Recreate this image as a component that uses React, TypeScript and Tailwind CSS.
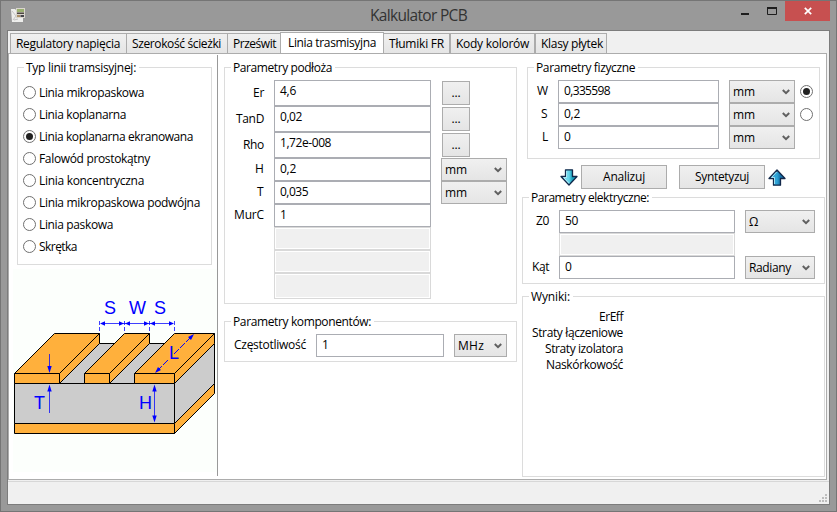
import { useLayoutEffect, useRef, useState } from "react";
import type { ReactNode } from "react";

/* Text whose tracking is tuned so that it takes exactly `w` pixels. */
function Fit({ w, children }: { w: number; children: string }) {
  const ref = useRef<HTMLSpanElement>(null);
  const [spacing, setSpacing] = useState(0);
  useLayoutEffect(() => {
    if (ref.current) {
      const natural = ref.current.getBoundingClientRect().width;
      setSpacing((w - natural) / children.length);
    }
  }, [w, children]);
  return (
    <span ref={ref} className="inline-block whitespace-nowrap" style={{ letterSpacing: spacing }}>
      {children}
    </span>
  );
}

function Group({ title, w, className, children }: { title: string; w: number; className: string; children?: ReactNode }) {
  return (
    <fieldset className={`shrink-0 border border-[#dcdcdc] ${className}`}>
      <legend className="ml-[6px] h-[15px] pl-[2px] pr-[3px] leading-[15px]">
        <Fit w={w}>{title}</Fit>
      </legend>
      {children}
    </fieldset>
  );
}

function Radio({ on = false }: { on?: boolean }) {
  return (
    <span className="flex size-[13px] shrink-0 items-center justify-center rounded-full border border-[#707070] bg-white">
      {on && <span className="size-[7px] rounded-full bg-[#212121]" />}
    </span>
  );
}

function Field({ text, w, className }: { text: string; w: number; className: string }) {
  return (
    <div className={`shrink-0 border border-[#abadb3] bg-white pl-[5px] pt-[2px] leading-4 ${className}`}>
      <Fit w={w}>{text}</Fit>
    </div>
  );
}

function Disabled({ className }: { className: string }) {
  return <div className={`shrink-0 border border-[#d9d9d9] bg-[#f0f0f0] shadow-[inset_0_0_0_1px_#fff] ${className}`} />;
}

function Select({ text, w, className }: { text: string; w: number; className: string }) {
  return (
    <div
      className={`flex h-[23px] shrink-0 items-center justify-between border border-[#acacac] bg-linear-to-b from-[#f0f0f0] to-[#e5e5e5] pl-[3px] pr-[4px] pt-px leading-4 ${className}`}
    >
      <Fit w={w}>{text}</Fit>
      <svg className="-mt-px h-[6px] w-[8px]" viewBox="0 0 8 6">
        <path d="M0.8 1 L4 4.2 L7.2 1" fill="none" stroke="#606060" strokeWidth="2" />
      </svg>
    </div>
  );
}

function Button({ text, w, className }: { text: string; w: number; className: string }) {
  return (
    <div
      className={`flex h-[24px] shrink-0 items-center justify-center border border-[#acacac] bg-linear-to-b from-[#f0f0f0] to-[#e5e5e5] leading-4 ${className}`}
    >
      <Fit w={w}>{text}</Fit>
    </div>
  );
}

function RowLabel({ text, w, className }: { text: string; w: number; className: string }) {
  return (
    <div className={`flex shrink-0 justify-end leading-4 ${className}`}>
      <Fit w={w}>{text}</Fit>
    </div>
  );
}

const tabs = [
  { t: "Regulatory napięcia", w: 104, c: "w-[116px] border-r-0" },
  { t: "Szerokość ścieżki", w: 89, c: "w-[101px] border-r-0" },
  { t: "Prześwit", w: 43, c: "w-[53px] border-r-0" },
  { t: "Linia trasmisyjna", w: 88, c: "" },
  { t: "Tłumiki FR", w: 55, c: "w-[66px] border-l-0" },
  { t: "Kody kolorów", w: 73, c: "w-[85px]" },
  { t: "Klasy płytek", w: 62, c: "w-[72px]" },
];

const lines = [
  { t: "Linia mikropaskowa", w: 105 },
  { t: "Linia koplanarna", w: 87 },
  { t: "Linia koplanarna ekranowana", w: 154 },
  { t: "Falowód prostokątny", w: 111 },
  { t: "Linia koncentryczna", w: 105 },
  { t: "Linia mikropaskowa podwójna", w: 161 },
  { t: "Linia paskowa", w: 74 },
  { t: "Skrętka", w: 38 },
];

function Arrow({ up = false }: { up?: boolean }) {
  return (
    <svg className={`h-[17px] w-[18px] shrink-0 ${up ? "rotate-180" : ""}`} viewBox="0 0 18 17">
      <defs>
        <linearGradient id={up ? "au" : "ad"} x1={up ? "1" : "0"} x2={up ? "0" : "1"} y1="0" y2="0">
          <stop offset="0.2" stopColor={up ? "#38a8dc" : "#7eddf0"} />
          <stop offset="0.5" stopColor={up ? "#2fa4d6" : "#66d4ea"} />
          <stop offset="0.7" stopColor={up ? "#1673ac" : "#18a0bc"} />
        </linearGradient>
      </defs>
      <path
        d="M5.5 0.8 H12.5 V7.5 H17 L9 16 L1 7.5 H5.5 Z"
        fill={up ? "url(#au)" : "url(#ad)"}
        stroke="#12284a"
        strokeWidth="1.3"
        strokeLinejoin="round"
      />
      <path d={up ? "M11.5 2 V8.5 H14.5 L9 14.4" : "M6.6 2 V8.5 H3.6 L9 14.4"} fill="none" stroke="#c4f2fa" strokeWidth="0.8" />
    </svg>
  );
}

function Diagram() {
  const orange = "#ffb03c";
  const gray = "#cccccc";
  const strips = [
    [14.5, 59.5],
    [84.5, 109.5],
    [134.5, 174.5],
  ];
  return (
    <svg className="block h-[203px] w-[204px] bg-[#fcfffc]" viewBox="13 269 204 203">
      <g stroke="#000" strokeWidth="1">
        <path d="M14.5 383.5 L54.5 343.5 H214.5 L174.5 383.5 Z" fill={gray} />
        <path d="M14.5 383.5 H174.5 V423.5 H14.5 Z" fill={gray} />
        <path d="M174.5 383.5 L214.5 343.5 V383.5 L174.5 423.5 Z" fill={gray} />
        <path d="M14.5 423.5 H174.5 V433.5 H14.5 Z" fill={orange} />
        <path d="M174.5 423.5 L214.5 383.5 V393.5 L174.5 433.5 Z" fill={orange} />
        {strips.map(([a, b]) => (
          <g key={a} fill={orange}>
            <path d={`M${a} 373.5 L${a + 40} 333.5 H${b + 40} L${b} 373.5 Z`} />
            <path d={`M${b} 373.5 L${b + 40} 333.5 V343.5 L${b} 383.5 Z`} />
            <path d={`M${a} 373.5 H${b} V383.5 H${a} Z`} />
          </g>
        ))}
      </g>
      <g stroke="#0000ff" strokeWidth="1" fill="none">
        <path d="M99.5 321 V332 M124.5 321 V332 M149.5 321 V332 M174.5 321 V332" strokeDasharray="4 2" strokeOpacity="0.75" />
        <path d="M101 323.5 H173" strokeOpacity="0.75" />
        <path d="M49.5 354 V371 M49.5 386 V413 M154.5 387 V421" strokeOpacity="0.75" />
        <path d="M157 371 L169 359 M174 354 L192 336" strokeDasharray="7 1.5" />
      </g>
      <g fill="#0000ff">
        {[100, 125, 150].map((x) => (
          <path key={x} d={`M${x} 323.5 l5 -2.2 v4.4 Z M${x + 24} 323.5 l-5 -2.2 v4.4 Z`} />
        ))}
        <path d="M49.5 373 l-2.2 -7 h4.4 Z M49.5 384.5 l-2.2 7 h4.4 Z" />
        <path d="M154.5 384.5 l-2.2 7 h4.4 Z M154.5 422.5 l-2.2 -7 h4.4 Z" />
        <path d="M155 373 l3 -6 l3 3 Z M194 334 l-6 3 l3 3 Z" />
        <g fontFamily="Liberation Sans, Arial, sans-serif" fontSize="18" textAnchor="middle">
          <text x="110" y="314">S</text>
          <text x="137.5" y="314">W</text>
          <text x="160" y="314">S</text>
          <text x="174" y="359">L</text>
          <text x="39.5" y="409">T</text>
          <text x="145.5" y="409">H</text>
        </g>
      </g>
    </svg>
  );
}

function TitleBar() {
  return (
    <div className="flex h-[29px] shrink-0 items-start">
      <svg className="ml-[10px] mt-[7px] h-[15px] w-[15px] shrink-0" viewBox="0 0 15 15">
        <path d="M0 1 H4 L6 3 V9 L12 10 V14 H1 Z" fill="#eeeeec" />
        <path d="M1 3 L5 8 L2 12 M3 12 L7 11" fill="none" stroke="#b9b9b9" strokeWidth="0.8" />
        <rect x="5" y="0" width="9" height="10" fill="#d9d5cd" />
        <rect x="6" y="1" width="7" height="3" fill="#9ab070" />
        <rect x="6" y="4.500" width="7" height="1.500" fill="#4c4540" />
        <rect x="6" y="7" width="3" height="2" fill="#ab9068" />
        <rect x="9.500" y="7" width="3.500" height="2" fill="#46464a" />
      </svg>
      <div className="ml-[344px] mt-[4px] w-[98px] text-[15.500px] leading-5 text-[#333]">
        <Fit w={97}>Kalkulator PCB</Fit>
      </div>
      <svg className="ml-[273px] mt-[6px] h-[10px] w-[37px] shrink-0" viewBox="0 0 37 10">
        <path d="M0 6 H8 V8 H0 Z" fill="#1e1e1e" />
        <path d="M26.500 1 V7.500 H35.500 V1" fill="none" stroke="#1e1e1e" />
        <path d="M26 0 H36 V2 H26 Z" fill="#1e1e1e" />
      </svg>
      <div className="ml-[7px] flex h-[20px] w-[45px] shrink-0 items-center justify-center bg-[#c75050]">
        <svg className="h-[8px] w-[8px]" viewBox="0 0 8 8">
          <path d="M0.800 0.800 L7.200 7.200 M7.200 0.800 L0.800 7.200" stroke="#fff" strokeWidth="1.700" />
        </svg>
      </div>
    </div>
  );
}

function LeftColumn() {
  return (
    <div className="flex w-[208px] shrink-0 flex-col pt-[6px]">
      <Group title="Typ linii tramsisyjnej:" w={110} className="ml-[8px] h-[205px] w-[195px]">
        <div className="flex flex-col pl-[5px] pt-[6px]">
          {lines.map((l, i) => (
            <div key={l.t} className="flex h-[22px] items-center gap-[3px]">
              <Radio on={i === 2} />
              <div className="pt-[2px] leading-4">
                <Fit w={l.w}>{l.t}</Fit>
              </div>
            </div>
          ))}
        </div>
      </Group>
      <div className="ml-[4px] mt-[4px]">
        <Diagram />
      </div>
    </div>
  );
}

function MiddleColumn() {
  const material = [
    { l: "Er", lw: 11, v: "4,6", vw: 16 },
    { l: "TanD", lw: 28, v: "0,02", vw: 22 },
    { l: "Rho", lw: 21, v: "1,72e-008", vw: 51 },
  ];
  const sizes = [
    { l: "H", lw: 9, v: "0,2", vw: 16, unit: true },
    { l: "T", lw: 7, v: "0,035", vw: 28, unit: true },
    { l: "MurC", lw: 30, v: "1", vw: 7, unit: false },
  ];
  return (
    <div className="ml-[6px] flex w-[293px] shrink-0 flex-col pt-[6px]">
      <Group title="Parametry podłoża" w={99} className="h-[244px] w-[293px]">
        <div className="flex flex-col pt-[5px]">
          {material.map((r) => (
            <div key={r.l} className="flex h-[26px] items-start">
              <RowLabel text={r.l} w={r.lw} className="w-[39px] pt-[5px]" />
              <Field text={r.v} w={r.vw} className="ml-[10px] h-[26px] w-[157px]" />
              <Button text="..." w={9} className="ml-[11px] mt-px w-[28px]" />
            </div>
          ))}
          {sizes.map((r) => (
            <div key={r.l} className="flex h-[23px] items-start">
              <RowLabel text={r.l} w={r.lw} className="w-[39px] pt-[3px]" />
              <Field text={r.v} w={r.vw} className="ml-[10px] h-[23px] w-[157px]" />
              {r.unit && <Select text="mm" w={22} className="ml-[10px] w-[66px]" />}
            </div>
          ))}
          <Disabled className="ml-[49px] h-[23px] w-[157px]" />
          <Disabled className="ml-[49px] h-[23px] w-[157px]" />
          <Disabled className="ml-[49px] h-[26px] w-[157px]" />
        </div>
      </Group>
      <Group title="Parametry komponentów:" w={138} className="mt-[10px] h-[48px] w-[293px]">
        <div className="flex pt-[5px]">
          <RowLabel text="Częstotliwość" w={72} className="w-[81px] pt-[3px]" />
          <Field text="1" w={7} className="ml-[10px] h-[23px] w-[128px]" />
          <Select text="MHz" w={26} className="ml-[10px] w-[53px]" />
        </div>
      </Group>
    </div>
  );
}

function RightColumn() {
  const physical = [
    { l: "W", lw: 11, v: "0,335598", vw: 46 },
    { l: "S", lw: 7, v: "0,2", vw: 16 },
    { l: "L", lw: 6, v: "0", vw: 7 },
  ];
  const results = [
    { t: "ErEff", w: 24 },
    { t: "Straty łączeniowe", w: 91 },
    { t: "Straty izolatora", w: 78 },
    { t: "Naskórkowość", w: 77 },
  ];
  return (
    <div className="ml-[5px] flex w-[303px] shrink-0 flex-col pt-[6px]">
      <Group title="Parametry fizyczne" w={99} className="ml-[5px] h-[99px] w-[293px]">
        <div className="flex flex-col pt-[5px]">
          {physical.map((r, i) => (
            <div key={r.l} className="flex h-[23px] items-start">
              <RowLabel text={r.l} w={r.lw} className="w-[20px] pt-[3px]" />
              <Field text={r.v} w={r.vw} className="ml-[10px] h-[23px] w-[161px]" />
              <Select text="mm" w={22} className="ml-[10px] w-[66px]" />
              {i < 2 && (
                <div className="ml-[5px] pt-[5px]">
                  <Radio on={i === 0} />
                </div>
              )}
            </div>
          ))}
        </div>
      </Group>
      <div className="ml-[38px] mt-[6px] flex h-[24px] items-center">
        <Arrow />
        <Button text="Analizuj" w={42} className="ml-[3px] w-[86px]" />
        <Button text="Syntetyzuj" w={54} className="ml-[12px] mr-[3px] w-[86px]" />
        <Arrow up />
      </div>
      <Group title="Parametry elektryczne:" w={118} className="mt-px h-[94px] w-[303px]">
        <div className="flex flex-col pt-[5px]">
          <div className="flex h-[23px] items-start">
            <RowLabel text="Z0" w={13} className="w-[26px] pt-[3px]" />
            <Field text="50" w={13} className="ml-[10px] h-[23px] w-[176px]" />
            <Select text="Ω" w={9} className="ml-[10px] w-[70px]" />
          </div>
          <Disabled className="ml-[36px] h-[23px] w-[176px]" />
          <div className="flex h-[23px] items-start">
            <RowLabel text="Kąt" w={17} className="w-[26px] pt-[3px]" />
            <Field text="0" w={7} className="ml-[10px] h-[23px] w-[176px]" />
            <Select text="Radiany" w={42} className="ml-[10px] w-[70px]" />
          </div>
        </div>
      </Group>
      <Group title="Wyniki:" w={39} className="mt-[5px] h-[188px] w-[303px]">
        <div className="flex w-[100px] flex-col items-end pt-[5px]">
          {results.map((r) => (
            <div key={r.t} className="h-4 leading-4">
              <Fit w={r.w}>{r.t}</Fit>
            </div>
          ))}
        </div>
      </Group>
    </div>
  );
}

export default function App() {
  return (
    <div className="flex h-[512px] w-[837px] flex-col overflow-hidden border border-[#757575] bg-[#999999] font-['Open_Sans','Noto_Sans',sans-serif] text-[12px] text-black">
      <TitleBar />
      <div className="ml-[6px] flex h-[475px] w-[823px] flex-col border border-[#7c7c7c] bg-[#f0f0f0]">
        <div className="flex h-[22px] shrink-0 items-end pl-[2px]">
          {tabs.map((tab) =>
            tab.c === "" ? (
              <div key={tab.t} className="-mb-px h-[22px] w-[104px] shrink-0 border border-b-0 border-[#acacac] bg-white pl-[7px] pt-[2px] leading-4">
                <Fit w={tab.w}>{tab.t}</Fit>
              </div>
            ) : (
              <div
                key={tab.t}
                className={`h-[20px] shrink-0 border border-b-0 border-[#acacac] bg-linear-to-b from-[#f0f0f0] to-[#e5e5e5] pl-[5px] pt-[2px] leading-4 ${tab.c}`}
              >
                <Fit w={tab.w}>{tab.t}</Fit>
              </div>
            ),
          )}
        </div>
        <div className="flex h-[427px] w-[819px] shrink-0 border border-[#acacac] bg-white">
          <LeftColumn />
          <div className="mt-px h-[421px] w-px shrink-0 bg-[#999]" />
          <MiddleColumn />
          <RightColumn />
        </div>
        <div className="mt-px flex flex-1 items-end justify-end border-t border-[#d7d7d7] pb-[2px] pr-[2px]">
          <svg className="h-[8px] w-[8px]" viewBox="0 0 8 8">
            <path d="M6 0h2v2h-2z M3 3h2v2h-2z M6 3h2v2h-2z M0 6h2v2h-2z M3 6h2v2h-2z M6 6h2v2h-2z" fill="#bdbdbd" />
          </svg>
        </div>
      </div>
    </div>
  );
}
